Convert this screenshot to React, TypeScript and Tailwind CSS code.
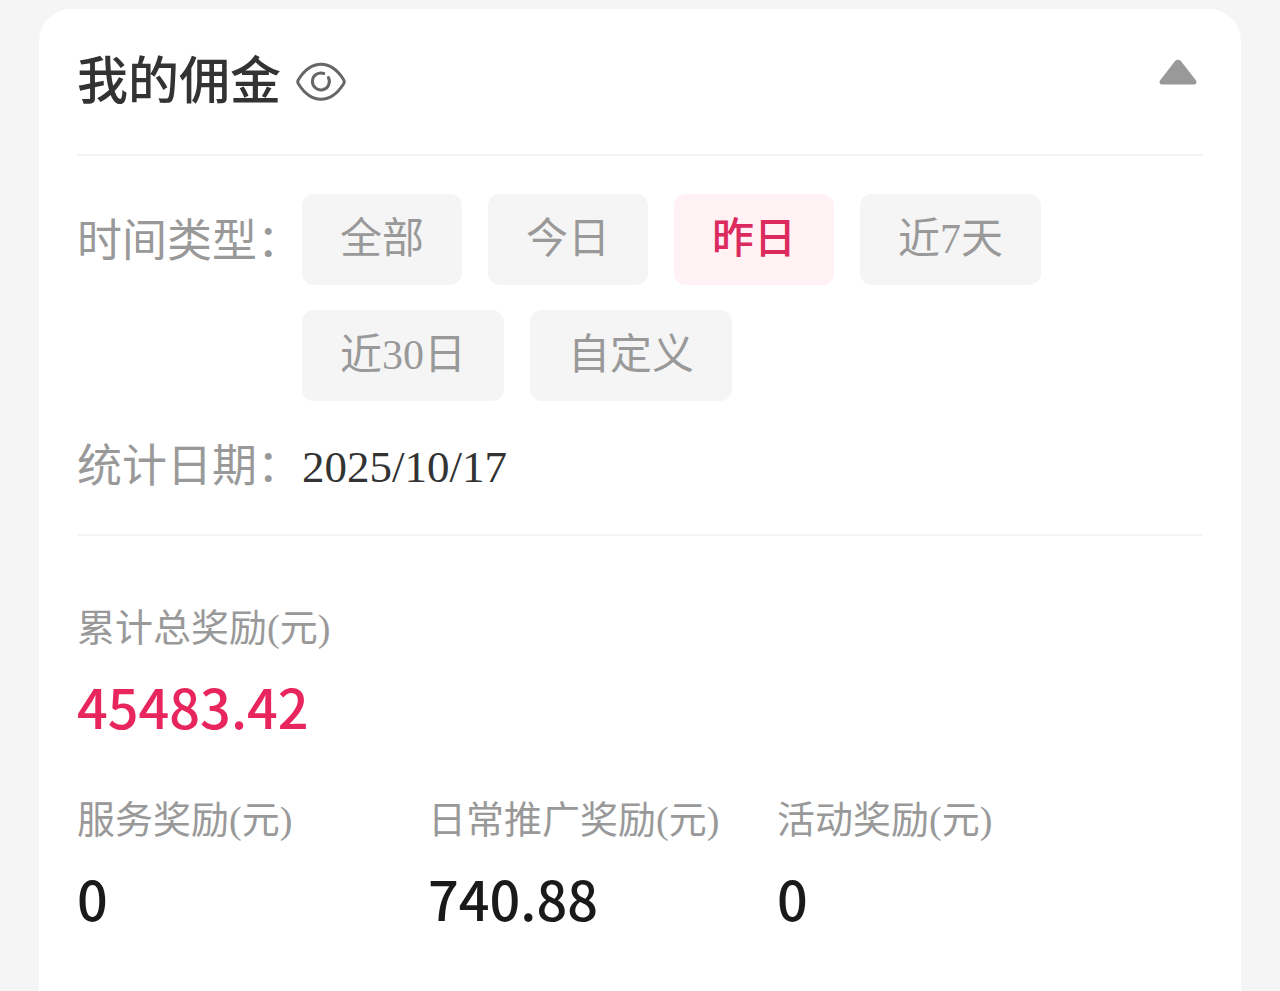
import { useState } from "react";

const PERIODS = ["全部", "今日", "昨日", "近7天", "近30日", "自定义"];

const BREAKDOWN = [
  { label: "服务奖励(元)", value: "0" },
  { label: "日常推广奖励(元)", value: "740.88" },
  { label: "活动奖励(元)", value: "0" },
];

function EyeIcon() {
  return (
    <svg viewBox="0 0 50 40" className="h-10 w-[50px]" fill="none" stroke="#666" strokeWidth="3" aria-hidden="true">
      <path
        d="M2.500 17.500C8.500 8 16 2.300 25 2.300S41.500 8 47.500 17.500Q49 19.700 47.500 22C41.500 31.500 34 37.200 25 37.200S8.500 31.500 2.500 22Q1 19.700 2.500 17.500Z"
        strokeLinejoin="round"
      />
      <path d="M27.800 11.500A8.500 8.500 0 1 0 32.400 15.500" strokeLinecap="round" />
    </svg>
  );
}

export default function App() {
  const [period, setPeriod] = useState("昨日");
  const [open, setOpen] = useState(true);
  const [visible, setVisible] = useState(true);

  return (
    <main
      lang="zh-CN"
      className="min-h-screen bg-[#f5f5f5] px-[39px] pt-[9px] font-['Liberation_Serif','Noto_Sans_CJK_SC',serif] text-[#999]"
    >
      <section className="min-h-[982px] rounded-t-[32px] bg-white px-[38px]">
        <header className="flex h-[147px] items-center justify-between border-b-2 border-[#f3f3f3]">
          <div className="flex items-center gap-[15px]">
            <h1 className="text-[51px] leading-[72px] font-medium text-[#333]">我的佣金</h1>
            <button type="button" aria-label="显示或隐藏金额" onClick={() => setVisible(!visible)}>
              <EyeIcon />
            </button>
          </div>
          <button
            type="button"
            aria-label="展开或收起"
            aria-expanded={open}
            onClick={() => setOpen(!open)}
            className="mr-[6px] mb-5"
          >
            <svg viewBox="0 0 38 26" className="h-[26px] w-[38px]" fill="#999" aria-hidden="true">
              <path d="M16.300 1.800Q19-.2 21.700 1.800L37 21.500Q38.500 25.500 35 25.500H3Q-.5 25.500 1 21.500Z" />
            </svg>
          </button>
        </header>
        {open && (
          <>
            <div className="border-b-2 border-[#f3f3f3] pt-[38px] pb-[34px]">
              <div className="flex">
                <p className="w-[225px] shrink-0 text-[45px] leading-[96px]">时间类型：</p>
                <div className="flex flex-wrap gap-x-[26px] gap-y-[25px]">
                  {PERIODS.map((item) => (
                    <button
                      key={item}
                      type="button"
                      aria-pressed={item === period}
                      onClick={() => setPeriod(item)}
                      className={
                        item === period
                          ? "h-[91px] rounded-xl bg-[#fff1f4] px-[38px] text-[42px] font-medium text-[#dc2a5e]"
                          : "h-[91px] rounded-xl bg-[#f5f5f5] px-[38px] text-[42px]"
                      }
                    >
                      {item}
                    </button>
                  ))}
                </div>
              </div>
              <div className="mt-[33px] flex text-[45px] leading-[66px]">
                <p className="w-[225px] shrink-0">统计日期：</p>
                <time className="text-[#333]">2025/10/17</time>
              </div>
            </div>
            <dl className="pt-16">
              <dt className="text-[38px] leading-[56px]">累计总奖励(元)</dt>
              <dd className="mt-[14px] font-['Noto_Sans_CJK_SC',sans-serif] text-[54px] leading-[72px] font-medium text-[#e8265d]">
                {visible ? "45483.42" : "****"}
              </dd>
            </dl>
            <dl className="mt-[50px] grid grid-cols-[351px_349px_auto]">
              {BREAKDOWN.map(({ label, value }) => (
                <div key={label}>
                  <dt className="text-[38px] leading-[56px]">{label}</dt>
                  <dd className="mt-[14px] font-['Noto_Sans_CJK_SC',sans-serif] text-[54px] leading-[72px] font-medium text-[#1a1a1a]">
                    {visible ? value : "****"}
                  </dd>
                </div>
              ))}
            </dl>
          </>
        )}
      </section>
    </main>
  );
}
